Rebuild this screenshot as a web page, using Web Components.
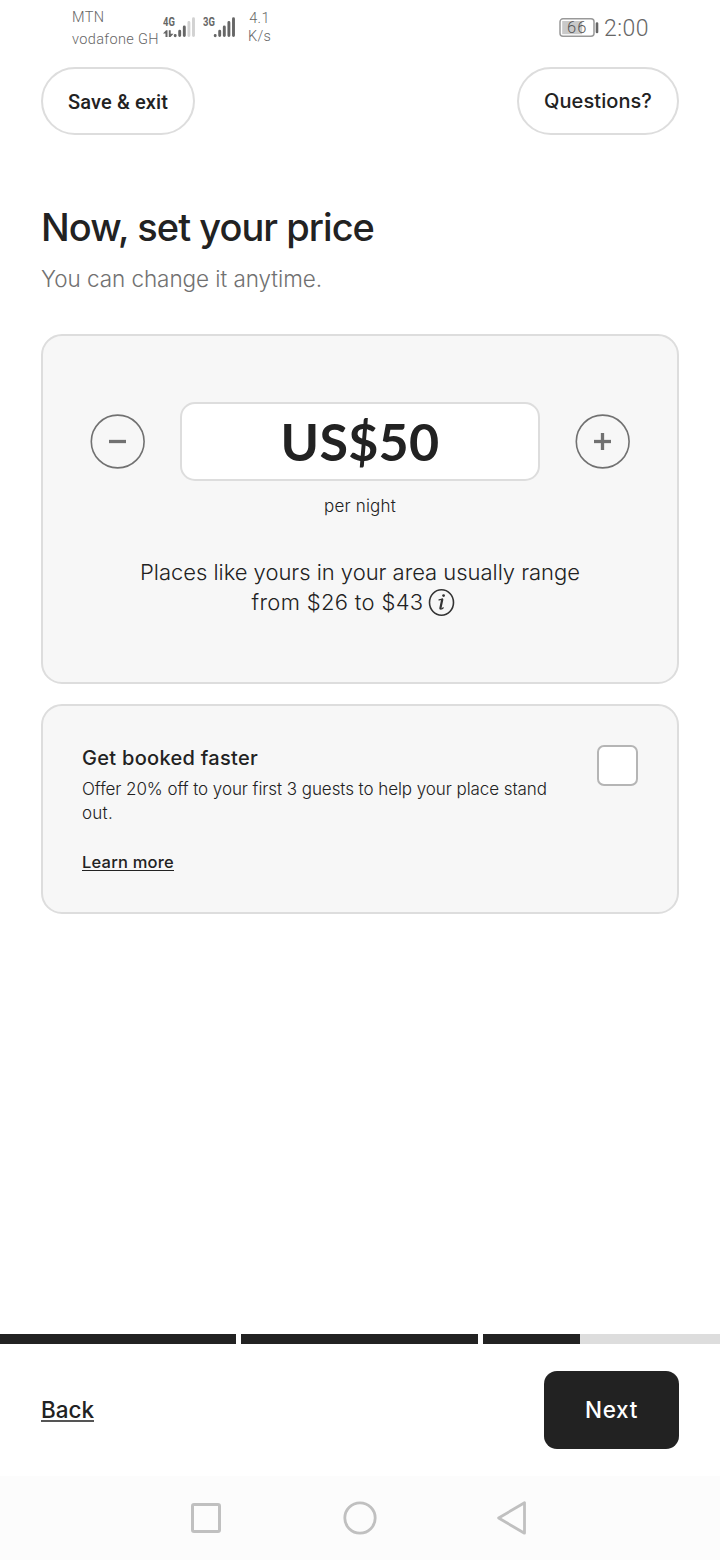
<!DOCTYPE html>
<html lang="en">
<head>
<meta charset="utf-8">
<title>Set your price</title>
<style>
html,body{margin:0;padding:0;background:#fff}
body{width:720px;height:1560px;overflow:hidden;color:#222;font-family:Inter,"Open Sans",sans-serif}
</style>
</head>
<body>
<price-screen></price-screen>
<script>
const define = (name, html, setup) => {
  const template = document.createElement('template');
  template.innerHTML = html;
  customElements.define(name, class extends HTMLElement {
    constructor() {
      super();
      this.attachShadow({ mode: 'open' }).append(template.content.cloneNode(true));
    }
    connectedCallback() { if (setup) setup(this, this.shadowRoot); }
  });
};

// A single line of text, tracked so that it spans the width in its "span" attribute.
define('text-line', `
<style>
:host{display:block;white-space:nowrap;font-kerning:normal}
span{display:inline-block;text-decoration:var(--line,none);text-underline-offset:2px;text-decoration-skip-ink:none}
</style><span><slot></slot></span>`, (host, root) => {
  host.style.fontSize = host.getAttribute('size') + 'px';
  host.style.lineHeight = host.getAttribute('line') + 'px';
  host.style.fontWeight = host.getAttribute('weight') || 400;
  const target = parseFloat(host.getAttribute('span'));
  const box = root.querySelector('span');
  const count = host.textContent.length;
  const natural = box.getBoundingClientRect().width;
  const spacing = (target - natural) / count;
  host.style.letterSpacing = spacing.toFixed(3) + 'px';
});

define('signal-icon', `
<style>:host{display:block;width:36px;height:24px}svg{display:block}
text{font:700 13.500px Roboto,sans-serif;fill:#666}
.off{stroke:#d2d2d2}.arrows{display:none}:host([data]) .arrows{display:block}</style>
<svg width="36" height="24" viewBox="0 0 36 24" fill="none" stroke="#666" stroke-width="2.900" stroke-linecap="round">
<g transform="scale(.7 1)"><text x="0" y="11.300" stroke="none"></text></g>
<g class="arrows" fill="#666" stroke="none"><path d="M0 18.400 3.100 15.300H4.500V22H2.500V18.400ZM5.800 15.300H7.700V18.800H10.500L7.500 22H5.800Z"/></g>
<path d="M12.200 20.400v.3M16.700 16.300V20.500M21.300 12V20.500"/><path class="tail" d="M25.900 7.500V20.500M30.500 3.800V20.500"/>
</svg>`, (host, root) => {
  root.querySelector('text').textContent = host.getAttribute('label');
  if (host.hasAttribute('weak')) root.querySelector('.tail').classList.add('off');
});

define('status-bar', `
<style>
:host{display:flex;height:67px;padding:0 71px 0 72px;box-sizing:border-box;color:#666;font-family:Roboto,sans-serif;align-items:flex-start}
.carrier{width:90.500px;padding-top:7px}
.rate{margin-left:9px;padding-top:10px;width:22px;display:grid;justify-items:center}
.sig{display:flex;gap:4.500px;margin-top:15px}
.right{margin-left:auto;display:flex;gap:5px}
.batt{margin-top:17px;width:40px;height:21px;display:block}
.batt text{font:350 16.500px Roboto,sans-serif;fill:#555}
.time{margin-top:15px}
</style>
<div class="carrier"><text-line size="14.5" line="22" weight="350" span="32.5">MTN</text-line><text-line size="14.5" line="22" weight="350" span="87">vodafone GH</text-line></div>
<div class="sig"><signal-icon label="4G" data weak></signal-icon><signal-icon label="3G"></signal-icon></div>
<div class="rate"><text-line size="14.5" line="18" weight="350" span="20.5">4.1</text-line><text-line size="14.5" line="18" weight="350" span="23">K/s</text-line></div>
<div class="right">
<svg class="batt" viewBox="0 0 40 21"><rect x="1" y="1.800" width="34" height="17.500" rx="3" fill="#fff" stroke="#999" stroke-width="1.500"/><rect x="3.200" y="4" width="20" height="13.200" fill="#c9c9c9"/><path d="M38 6.500v8.500" stroke="#666" stroke-width="2.600" stroke-linecap="round"/><text x="8" y="16.400" textLength="19.500">66</text></svg>
<text-line class="time" size="23" line="28" weight="350" span="45">2:00</text-line>
</div>`);

define('pill-button', `
<style>:host{display:flex;align-items:center;justify-content:center;box-sizing:border-box;height:68px;border:2px solid #ddd;border-radius:34px;background:#fff}</style><slot></slot>`);

define('round-button', `
<style>:host{display:block;width:55px;height:55px}svg{display:block}.v{display:none}:host([plus]) .v{display:block}</style>
<svg width="55" height="55" fill="none" stroke="#717171"><circle cx="27.700" cy="27.500" r="26.400" stroke-width="1.600"/><path d="M19 27.500H36" stroke-width="3.300"/><path class="v" d="M27.500 19V36" stroke-width="3.300"/></svg>`);

define('info-card', `
<style>:host{display:block;box-sizing:border-box;border:2px solid #ddd;border-radius:21px;background:#f7f7f7}</style><slot></slot>`);

define('info-icon', `
<style>:host{display:block;width:27px;height:28px}svg{display:block}</style>
<svg width="27" height="28" fill="none" stroke="#333" stroke-linecap="round" stroke-linejoin="round"><ellipse cx="13.500" cy="14.500" rx="12" ry="12.700" stroke-width="1.600"/><path d="M11 11.800 14.600 11.200" stroke-width="1.200"/><path d="M14.200 11.700 12.400 20.200" stroke-width="2.200"/><path d="M12.200 20.900 14 20.800 15.300 19.800" stroke-width="1.200"/><circle cx="15.600" cy="7.600" r="1.400" fill="#333" stroke="none"/></svg>`);

define('price-card', `
<style>
:host{display:block}
info-card{height:350px;padding-top:66px}
.row{display:flex;align-items:center;justify-content:space-between;padding:0 47px}
.field{width:360px;height:79px;box-sizing:border-box;border:2px solid #ddd;border-radius:15px;background:#fff;display:flex;align-items:center;justify-content:center;font-family:Lato,sans-serif}
.note{display:grid;justify-items:center}
.per{margin-top:13px;margin-bottom:39px}
.end{display:flex;gap:4px;align-items:center;height:30px;margin-right:14px}
</style>
<info-card>
<div class="row"><round-button></round-button><div class="field"><text-line size="52" line="73" weight="700" span="159">US$50</text-line></div><round-button plus></round-button></div>
<div class="note"><text-line class="per" size="17" line="24" weight="300" span="72">per night</text-line>
<text-line size="22" line="30" span="440" weight="350">Places like yours in your area usually range</text-line>
<div class="end"><text-line size="22" line="30" span="172" weight="350">from $26 to $43</text-line><info-icon></info-icon></div></div>
</info-card>`);

define('promo-card', `
<style>
:host{display:block}
info-card{height:210px}
.in{display:flex;justify-content:space-between;padding:39px 39px 0}
.desc{margin:6px 0 25px}
.link{--line:underline 1.300px}
.box{width:41px;height:41px;box-sizing:border-box;border:2px solid #b5b5b5;border-radius:7px;background:#fff}
</style>
<info-card><div class="in"><div>
<text-line size="20" line="26" weight="550" span="176">Get booked faster</text-line>
<div class="desc"><text-line size="17" line="24" weight="300" span="465">Offer 20% off to your first 3 guests to help your place stand</text-line><text-line size="17" line="24" weight="300" span="31">out.</text-line></div>
<text-line class="link" size="16.500" line="24" weight="550" span="92">Learn more</text-line>
</div><div class="box"></div></div></info-card>`);

define('progress-bar', `
<style>:host{display:grid;grid-template-columns:236px 237px 237px;gap:5px;height:10px}
div{background:#222}.part{background:linear-gradient(to right,#222 97px,#ddd 97px)}</style><div></div><div></div><div class="part"></div>`);

define('page-footer', `
<style>
:host{display:flex;height:132px;padding:0 41px;align-items:center;justify-content:space-between}
.back{--line:underline 2px #555}
.next{width:135px;height:78px;border-radius:13px;background:#222;color:#fff;display:flex;align-items:center;justify-content:center}
</style>
<text-line class="back" size="22.5" line="30" weight="500" span="53">Back</text-line>
<div class="next"><text-line size="22.5" line="30" weight="550" span="53">Next</text-line></div>`);

define('system-nav', `
<style>:host{display:flex;height:84px;align-items:center;justify-content:center;gap:119px;background:#fcfcfc}svg{display:block}</style>
<svg width="34" height="36" fill="none" stroke="#c0c0c0" stroke-width="3"><rect x="2.500" y="4.500" width="27" height="27" rx="1.500"/></svg>
<svg width="34" height="36" fill="none" stroke="#c0c0c0" stroke-width="2.800"><circle cx="17" cy="18" r="15.200"/></svg>
<svg width="34" height="36" fill="none" stroke="#c0c0c0" stroke-width="2.800" stroke-linejoin="round"><path d="M2.600 18 28.500 2.800V33.200Z"/></svg>`);

define('price-screen', `
<style>
:host{display:flex;flex-direction:column;height:1560px;width:720px}
.actions{display:flex;justify-content:space-between;padding:0 41px}
.save{width:154px;font-family:Roboto,sans-serif}
.save text-line{margin-top:2px}
.ask{width:162px}
main{padding:68px 41px 0;flex:1}
.sub{color:#717171;margin:13px 0 40px}
promo-card{margin-top:20px}
</style>
<status-bar></status-bar>
<div class="actions">
<pill-button class="save"><text-line size="20" line="26" weight="500" span="100">Save &amp; exit</text-line></pill-button>
<pill-button class="ask"><text-line size="20" line="26" weight="500" span="108">Questions?</text-line></pill-button>
</div>
<main>
<text-line size="38" line="48" weight="550" span="333">Now, set your price</text-line>
<text-line class="sub" size="22.5" line="30" weight="350" span="281">You can change it anytime.</text-line>
<price-card></price-card>
<promo-card></promo-card>
</main>
<progress-bar></progress-bar>
<page-footer></page-footer>
<system-nav></system-nav>`);
</script>
</body>
</html>
